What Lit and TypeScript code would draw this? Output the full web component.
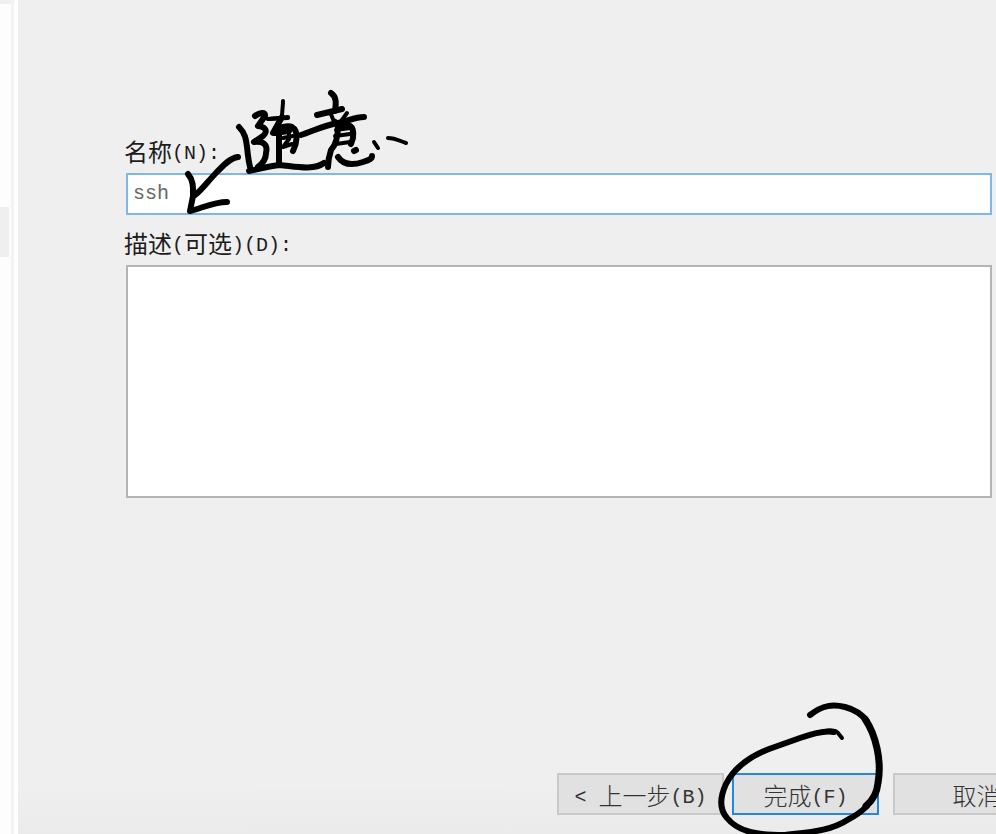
import { LitElement, html, css } from "lit";
import { customElement, state } from "lit/decorators.js";

@customElement("app-root")
export class AppRoot extends LitElement {
  @state() private name = "ssh";
  @state() private description = "";

  static styles = css`
    :host {
      display: flex;
      min-height: 100vh;
      overflow: hidden;
      background: linear-gradient(#efefef 94%, #ebebeb);
      color: #1c1c1c;
      font: 24px/34px "Noto Sans CJK SC", sans-serif;
    }
    * {
      box-sizing: border-box;
    }
    .steps {
      flex: none;
      width: 18px;
      padding-top: 207px;
      border-right: 4px solid #fff;
      background: linear-gradient(90deg, transparent 11px, #f3f3f3 11px),
        linear-gradient(#efefef 4px, #fdfdfd 4px);
    }
    .current {
      width: 9px;
      height: 50px;
      background: #efefef;
    }
    .page {
      flex: 1;
      min-width: 0;
      display: flex;
      flex-direction: column;
      justify-content: space-between;
      padding: 134px 4px 19px 106px;
    }
    .form {
      display: grid;
      gap: 11px;
    }
    .field {
      position: relative;
      display: grid;
      gap: 5px;
    }
    .latin,
    .box {
      font-family: "Liberation Mono", monospace;
      font-size: 20px;
    }
    .latin {
      line-height: 20px;
      vertical-align: 2px;
    }
    .box {
      height: 42px;
      margin: 0 0 0 2px;
      padding: 0 5px 2px;
      border: 2px solid #7db9e8;
      border-radius: 0;
      outline: none;
      background: #fff;
      color: #666;
    }
    .area {
      height: 233px;
      border-color: #b4b4b4;
      resize: none;
    }
    .actions {
      display: flex;
      justify-content: flex-end;
      gap: 8px;
      margin-right: -68px;
    }
    .finish {
      position: relative;
      margin-right: 6px;
    }
    .button {
      display: block;
      width: 167px;
      height: 42px;
      padding: 2px 0 0;
      border: 2px solid #c9c9c9;
      border-radius: 0;
      background: #e1e1e1;
      color: #333;
      font: inherit;
      font-weight: 300;
      line-height: 36px;
      white-space: pre;
    }
    .primary {
      width: 147px;
      border-color: #2488dc;
    }
    .ink {
      position: absolute;
      z-index: 1;
      fill: none;
      stroke: #000;
      stroke-width: 6px;
      stroke-linecap: round;
      stroke-linejoin: round;
      pointer-events: none;
    }
    .fine {
      stroke-width: 4px;
    }
    .broad {
      stroke-width: 7px;
    }
    .note {
      left: 56px;
      top: -46px;
    }
    .ring {
      left: -17px;
      top: -73px;
    }
  `;

  private note() {
    return html`<svg class="ink note" width="232" height="130" viewBox="180 88 232 130" role="img" aria-label="随意">
      <path d="M238 157C229 158 222 167 216 173C208 181 202 190 195 195" />
      <path d="M188 174C194 181 193 189 193 196L190 211C202 208 214 202 227 202" />
      <path d="M239 127C245 133 246 139 247 147C248 157 249 165 251 170" />
      <path d="M249 171C260 169 268 166 280 165C293 166 313 171 324 163" />
      <path d="M255 116C259 113 266 111 265 116L258 126C266 127 268 131 263 136L254 142C264 141 268 145 266 153C266 160 262 164 258 167" />
      <path class="fine" d="M283 101C283 106 282 112 282 117L273 133M268 119L288 117" />
      <path d="M282 117L273 133C279 127 288 125 292 127C299 131 297 143 293 151M279 132V164M274 133L289 131" />
      <path class="fine" d="M289 131V139L283 147M283 138L293 136M283 147L292 144M268 119L288 118" />
      <path d="M301 135C313 131 322 126 338 123C348 121 355 117 364 117" />
      <path d="M331 93C337 97 336 104 335 111M317 115L342 109" />
      <path d="M335 122L340 128L347 124M338 125C338 137 335 146 331 150C329 156 328 160 328 167" />
      <path class="fine" d="M330 112L335 124M347 113L339 124M335 136L350 134M336 144L350 142M336 130L350 128" />
      <path d="M340 126L348 125C355 127 354 138 351 144" />
      <path d="M354 151L356 150M338 157C344 166 354 165 363 162C369 160 372 159 372 156" />
      <path class="fine" d="M374 142L378 148M388 138C395 138 400 141 406 143" />
    </svg>`;
  }

  private ring() {
    return html`<svg class="ink ring" width="176" height="146" viewBox="715 700 176 146" aria-hidden="true">
      <path class="fine" d="M800 738C813 733 834 727 838 733L842 738" />
      <path d="M810 715C823 705 833 704 845 707C857 710 863 716 867 721" />
      <path d="M867 806C861 812 855 816 849 819C831 831 811 832 785 835C760 835 739 833 727 818C720 810 719 799 726 784C735 766 751 756 769 749L800 738C814 733 826 730 834 732" />
      <path class="broad" d="M865 719C876 735 882 761 878 783C877 793 872 801 866 806" />
    </svg>`;
  }

  render() {
    return html`
      <aside class="steps"><div class="current"></div></aside>
      <main class="page">
        <div class="form">
          <div class="field">
            <label for="name">名称<span class="latin">(N):</span></label>
            <input id="name" class="box" .value=${this.name}
              @input=${(e: Event) => (this.name = (e.target as HTMLInputElement).value)} />
            ${this.note()}
          </div>
          <div class="field">
            <label for="description">描述<span class="latin">(</span>可选<span class="latin">)(D):</span></label>
            <textarea id="description" class="box area" .value=${this.description}
              @input=${(e: Event) => (this.description = (e.target as HTMLTextAreaElement).value)}></textarea>
          </div>
        </div>
        <div class="actions">
          <button class="button" type="button"><span class="latin">&lt; </span>上一步<span class="latin">(B)</span></button>
          <div class="finish">
            <button class="button primary" type="button">完成<span class="latin">(F)</span></button>
            ${this.ring()}
          </div>
          <button class="button" type="button">取消</button>
        </div>
      </main>
    `;
  }
}
